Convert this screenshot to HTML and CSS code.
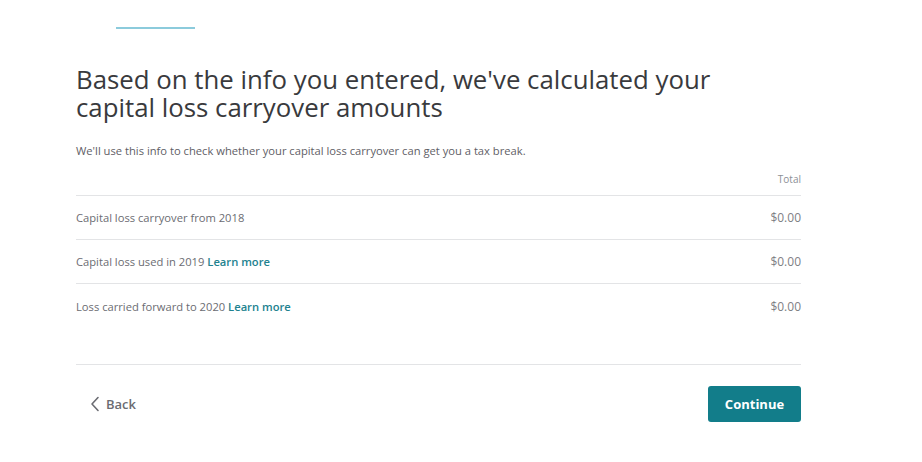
FILE: index.html
```html
<!DOCTYPE html>
<html>
<head>
<meta charset="utf-8">
<link rel="stylesheet" href="styles.css">
</head>
<body>
<div class="page">
  <div class="progress"></div>
  <h1 class="title">Based on the info you entered, we've calculated your capital loss carryover amounts</h1>
  <p class="sub">We'll use this info to check whether your capital loss carryover can get you a tax break.</p>
  <div class="table">
    <div class="head">Total</div>
    <div class="row"><span>Capital loss carryover from 2018</span><span class="amt">$0.00</span></div>
    <div class="row"><span>Capital loss used in 2019 <a class="link">Learn more</a></span><span class="amt">$0.00</span></div>
    <div class="row last"><span>Loss carried forward to 2020 <a class="link">Learn more</a></span><span class="amt">$0.00</span></div>
  </div>
  <div class="footer">
    <button class="back"><svg width="10" height="16" viewBox="0 0 10 16"><path d="M8 1.5 L2 8 L8 14.5" fill="none" stroke="#6b6c72" stroke-width="1.6" stroke-linecap="round" stroke-linejoin="round"/></svg><span>Back</span></button>
    <button class="continue">Continue</button>
  </div>
</div>
</body>
</html>
```
FILE: styles.css
```css
* { box-sizing: border-box; }
html, body { margin: 0; padding: 0; background: #fff; }
body { font-family: "Open Sans", "Lato", sans-serif; color: #393a3d; }
.page { width: 725px; margin-left: 76px; padding-top: 27px; }
.progress { width: 79px; height: 2px; background: #8ccbdc; margin-left: 40px; }
.title { font-size: 25.8px; font-weight: 400; line-height: 28px; margin: 36px 0 0 0; color: #393a3d; letter-spacing: 0; width: 680px; }
.sub { font-size: 11.2px; color: #5f6066; margin: 22px 0 0 0; line-height: 16px; }
.table { margin-top: 12px; }
.head { text-align: right; font-size: 10px; color: #8d9096; line-height: 16px; padding-bottom: 8px; border-bottom: 1px solid #e3e4e6; }
.row { display: flex; justify-content: space-between; align-items: center; height: 44px; border-bottom: 1px solid #e3e4e6; font-size: 11.2px; color: #6b6c72; }
.row.last { border-bottom: none; }
.amt { color: #808084; font-size: 12px; }
.link { color: #22828f; font-weight: 600; }
.footer { margin-top: 36px; border-top: 1px solid #e3e4e6; display: flex; justify-content: space-between; align-items: center; padding-top: 21px; }
.back { background: none; border: none; display: flex; align-items: center; gap: 6px; padding: 0 0 0 14px; font-family: inherit; font-size: 13px; font-weight: 600; color: #6b6c72; }
.continue { width: 93px; height: 36px; background: #127d8a; color: #fff; border: none; border-radius: 3px; font-family: inherit; font-size: 13px; font-weight: 700; }
```
